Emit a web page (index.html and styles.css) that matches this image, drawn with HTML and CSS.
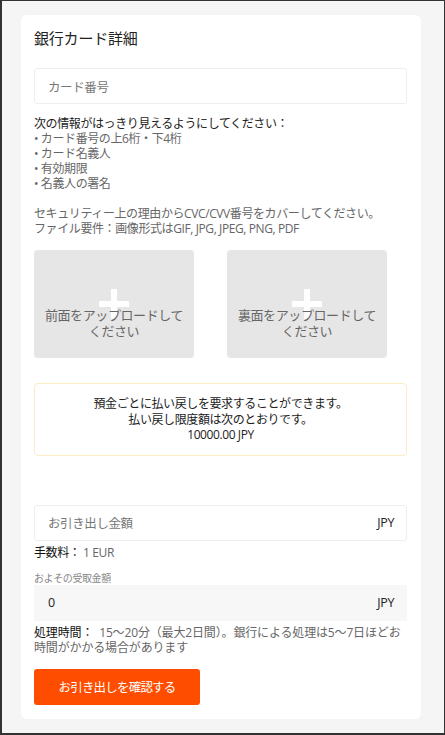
FILE: index.html
```html
<html>
<head>
<meta charset="utf-8">
<meta name="viewport" content="width=device-width, initial-scale=1">
<link rel="stylesheet" href="styles.css">
</head>
<body>
<div class="frame">
	<div class="card">
		<h2 class="title">銀行カード詳細</h2>
		<div class="field">
			<span class="placeholder">カード番号</span>
		</div>
		<div class="info">
			<p class="lead">次の情報がはっきり見えるようにしてください：</p>
			<p>• カード番号の上6桁・下4桁</p>
			<p>• カード名義人</p>
			<p>• 有効期限</p>
			<p>• 名義人の署名</p>
			<p>&nbsp;</p>
			<p>セキュリティー上の理由からCVC/CVV番号をカバーしてください。</p>
			<p>ファイル要件：画像形式はGIF, JPG, JPEG, PNG, PDF</p>
		</div>
		<div class="uploads">
			<div class="upload"><span>前面をアップロードしてください</span></div>
			<div class="upload"><span>裏面をアップロードしてください</span></div>
		</div>
		<div class="notice">
			<p>預金ごとに払い戻しを要求することができます。</p>
			<p>払い戻し限度額は次のとおりです。</p>
			<p>10000.00 JPY</p>
		</div>
		<div class="field amount">
			<span class="placeholder">お引き出し金額</span>
			<span class="unit">JPY</span>
		</div>
		<p class="fee"><b>手数料：</b> 1 EUR</p>
		<p class="small-label">およその受取金額</p>
		<div class="field readonly">
			<span class="value">0</span>
			<span class="unit">JPY</span>
		</div>
		<p class="time"><b>処理時間：</b>&nbsp; 15〜20分（最大2日間）。銀行による処理は5〜7日ほどお時間がかかる場合があります</p>
		<button class="submit">お引き出しを確認する</button>
	</div>
</div>
</body>
</html>
```

FILE: styles.css
```css
html, body {
	margin: 0;
	padding: 0;
}

body {
	font-family: "Open Sans", "Noto Sans CJK JP", sans-serif;
	color: #333;
	font-size: 12px;
	letter-spacing: -0.4px;
}

.frame {
	box-sizing: border-box;
	height: 735px;
	background: #f5f5f5;
	border: 1px solid #333;
	border-left-width: 2px;
	border-bottom-width: 2px;
	padding: 14px 0 0 19px;
}

.card {
	box-sizing: border-box;
	width: 400px;
	background: #fff;
	border-radius: 6px;
	padding: 13px 14px 14px 13px;
}

.title {
	margin: 0 0 20px 0;
	font-size: 15px;
	font-weight: normal;
	line-height: 20px;
	letter-spacing: -0.2px;
	color: #222;
}

.field {
	box-sizing: border-box;
	height: 36px;
	border: 1px solid #eee;
	border-radius: 3px;
	display: flex;
	align-items: center;
	justify-content: space-between;
	padding: 0 12px 0 13px;
	font-size: 12.5px;
}

.placeholder {
	color: #777;
}

.unit {
	color: #222;
}

.info {
	margin-top: 12px;
	line-height: 15px;
	color: #666;
}

.info p, .notice p {
	margin: 0;
}

.info .lead {
	color: #222;
}

.uploads {
	display: flex;
	gap: 33px;
	margin-top: 14px;
}

.upload {
	position: relative;
	width: 160px;
	height: 108px;
	background: #e6e6e6;
	border-radius: 4px;
	display: flex;
	align-items: center;
	justify-content: center;
}

.upload::before,
.upload::after {
	content: "";
	position: absolute;
	background: #fff;
	left: 50%;
	top: 50%;
}

.upload::before {
	width: 30px;
	height: 6px;
	margin: -3px 0 0 -15px;
}

.upload::after {
	width: 6px;
	height: 30px;
	margin: -15px 0 0 -3px;
}

.upload span {
	position: relative;
	z-index: 1;
	width: 146px;
	margin-top: 38px;
	text-align: center;
	font-size: 13px;
	line-height: 16px;
	color: #666;
}

.notice {
	margin-top: 25px;
	border: 1px solid #fcecc4;
	border-radius: 4px;
	padding: 12px;
	text-align: center;
	line-height: 15.5px;
	color: #222;
}

.amount {
	margin-top: 49px;
}

.fee {
	margin: 4px 0 0 0;
	line-height: 16px;
	color: #666;
}

.fee b, .time b {
	font-weight: normal;
	color: #111;
}

.small-label {
	margin: 10px 0 0 0;
	font-size: 10px;
	line-height: 14px;
	color: #888;
}

.readonly {
	background: #f7f7f7;
	border-color: #f7f7f7;
	border-radius: 0;
}

.value {
	color: #222;
}

.time {
	margin: 4px 0 0 0;
	line-height: 15px;
	letter-spacing: -0.15px;
	color: #666;
}

.submit {
	display: block;
	margin-top: 14px;
	width: 166px;
	height: 36px;
	border: none;
	border-radius: 3px;
	background: #ff4d00;
	color: #fff;
	font-family: inherit;
	font-size: 12.5px;
	letter-spacing: -0.8px;
}
```
